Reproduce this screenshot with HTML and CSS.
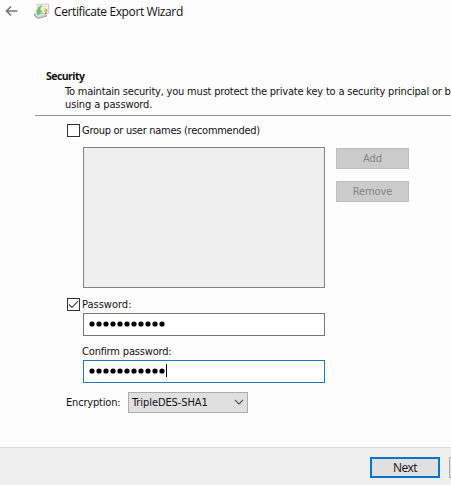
FILE: index.html
```
<!DOCTYPE html>
<html lang="en">
<head>
<meta charset="utf-8">
<title>Certificate Export Wizard</title>
<link rel="stylesheet" href="styles.css">
</head>
<body>
<main class="wizard">
  <header class="titlebar">
    <svg class="back" width="13" height="12" viewBox="0 0 13 12"><path d="M12.3 6H1.5M6 1.5L1.5 6L6 10.5" fill="none" stroke="#777" stroke-width="1.7"/></svg>
    <svg class="cert" width="17" height="17" viewBox="0 0 17 17">
      <path d="M4 1.5L15.5 1V10.5L5 11Z" fill="#f5f3e5" stroke="#c3c2ba" stroke-width=".8"/>
      <path d="M9 3.5H13M10 5.5H13" stroke="#d2d2cc" stroke-width=".8"/>
      <circle cx="13" cy="7.5" r="1.7" fill="#e0b649"/>
      <path d="M12.2 9V11.5L13 10.7L13.8 11.5V9" fill="#b79a50"/>
      <path d="M1 11L10 10L14 12.5L5 15Z" fill="#d4dade" stroke="#9ca5aa" stroke-width=".7"/>
      <path d="M1 11V13L5 16L14 13.5V12.5L5 15Z" fill="#a1aaad"/>
      <path d="M9 2.5C6 3 4.5 5 4.8 7.5H3L5.5 12L9.5 7.8H7.3C7.1 6 7.5 4 9 2.5Z" fill="#6acb60" stroke="#4eae4e" stroke-width=".4"/>
    </svg>
    <h1 class="title">Certificate Export Wizard</h1>
  </header>
  <section class="intro">
    <h2 class="heading">Security</h2>
    <p class="description"><span class="line first">To maintain security, you must protect the private key to a security principal or b</span><span class="line second">using a password.</span></p>
  </section>
  <section class="form">
    <div class="check-row"><span class="checkbox"></span><span class="group-label">Group or user names (recommended)</span></div>
    <div class="principals">
      <div class="list"></div>
      <div class="actions"><div class="button disabled">Add</div><div class="button disabled remove">Remove</div></div>
    </div>
    <div class="check-row password-row"><span class="checkbox"><svg width="11" height="11" viewBox="0 0 11 11"><path d="M1 5.5L4 8.5L10 2.2" fill="none" stroke="#444" stroke-width="1.2"/></svg></span><span class="password-label">Password:</span></div>
    <div class="input"><svg width="77" height="8"><g id="dots"><circle cx="3" cy="4" r="2.6"/><circle cx="10" cy="4" r="2.6"/><circle cx="17" cy="4" r="2.6"/><circle cx="24" cy="4" r="2.6"/><circle cx="31" cy="4" r="2.6"/><circle cx="38" cy="4" r="2.6"/><circle cx="45" cy="4" r="2.6"/><circle cx="52" cy="4" r="2.6"/><circle cx="59" cy="4" r="2.6"/><circle cx="66" cy="4" r="2.6"/><circle cx="73" cy="4" r="2.6"/></g></svg></div>
    <div class="confirm-label">Confirm password:</div>
    <div class="input focused"><svg width="77" height="8"><use href="#dots"/></svg><span class="caret"></span></div>
    <div class="encryption"><span class="encryption-label">Encryption:</span><div class="select"><span class="select-value">TripleDES-SHA1</span><svg width="10" height="7" viewBox="0 0 10 7"><path d="M1 1L5 5L9 1" fill="none" stroke="#555" stroke-width="1.1"/></svg></div></div>
  </section>
  <footer class="footer"><div class="button next">Next</div><div class="button cancel"></div></footer>
</main>
</body>
</html>
```
FILE: styles.css
```
* { box-sizing: border-box; }
body { margin: 0; overflow: hidden; background: #fefdfe; color: #111; font: 11px/13px "DejaVu Sans Condensed", "DejaVu Sans", sans-serif; font-stretch: condensed; }
h1, h2, p { margin: 0; }
svg { display: block; flex: none; }
.wizard { width: 451px; height: 485px; overflow: hidden; display: flex; flex-direction: column; white-space: nowrap; }
.titlebar { height: 70px; display: flex; align-items: flex-start; padding: 3px 0 0 5px; }
.back { margin-top: 2px; }
.cert { margin: 0 0 0 15px; }
.title { font: 12px/18px "Open Sans", "Noto Sans", sans-serif; letter-spacing: -.39px; margin-left: 4px; }
.intro { height: 46px; margin-left: 35px; border-bottom: 1px solid #999a9f; }
.heading { font: bold 10.5px/12px "Open Sans", sans-serif; letter-spacing: -.55px; padding-left: 11px; }
.description { margin: 3px 0 0 30px; }
.line { display: block; }
.first { letter-spacing: -.2px; }
.second { letter-spacing: -.11px; }
.group-label { letter-spacing: -.28px; }
.form { height: 331px; padding: 8px 0 0 67px; }
.check-row { display: flex; height: 13px; gap: 2px; }
.checkbox { width: 13px; height: 13px; border: 1px solid #333; background: #fff; flex: none; }
.principals { display: flex; gap: 11px; margin: 10px 0 0 16px; }
.list { width: 242px; height: 141px; border: 1px solid #828286; background: #f0eff0; }
.actions { display: flex; flex-direction: column; gap: 12px; padding-top: 1px; }
.button { width: 73px; height: 21px; display: flex; align-items: center; justify-content: center; border: 1px solid #adadad; background: #e1e0e1; }
.disabled { color: #838383; background: #cccbcc; border-color: #bfbebf; }
.remove { letter-spacing: -.1px; }
.password-row { margin-top: 10px; }
.input { width: 242px; height: 23px; margin: 2px 0 0 16px; border: 1px solid #77777b; background: #fff; display: flex; align-items: center; padding: 0 0 2px 5px; }
.confirm-label { margin: 9px 0 0 15px; letter-spacing: -.17px; }
.focused { border-color: #2278b5; }
.caret { width: 1px; height: 13px; background: #000; }
.encryption { display: flex; align-items: center; margin-top: 9px; height: 21px; }
.encryption-label { width: 62px; margin-left: -1px; letter-spacing: -.18px; }
.select { width: 120px; height: 21px; border: 1px solid #adadad; background: #e1e0e1; display: flex; align-items: center; justify-content: space-between; padding: 0 3px; letter-spacing: -.08px; }
.footer { height: 38px; border-top: 1px solid #dbdadb; background: #f0eff0; display: flex; padding: 9px 0 0 370px; gap: 9px; }
.next { width: 70px; border: 2px solid #0875ca; font: 12px/18px "Open Sans", sans-serif; letter-spacing: -.6px; flex: none; }
.cancel { flex: none; }
```
